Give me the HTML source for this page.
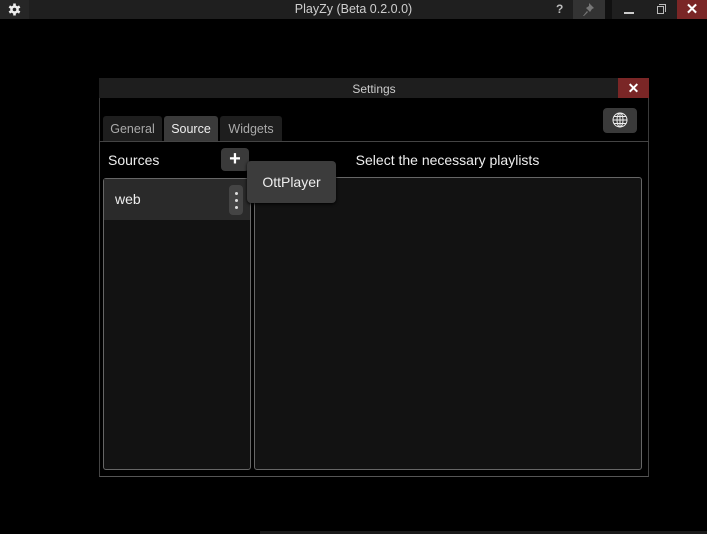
<!DOCTYPE html>
<html><head><meta charset="utf-8"><style>
*{margin:0;padding:0;box-sizing:border-box}
body{width:707px;height:534px;background:#000;position:relative;overflow:hidden;font-family:"Liberation Sans",sans-serif;color:#e8e8e8}
.a{position:absolute}
</style></head><body>
<div class="a" style="left:0;top:0;width:707px;height:19px;background:#1f1f1f"></div>
<div class="a" style="left:0;top:0;width:29px;height:19px;background:#262626"></div>
<svg class="a" style="left:8px;top:3px" width="13" height="13" viewBox="0 0 13 13"><g fill="#eee"><circle cx="6.5" cy="6.5" r="4.3"/><rect x="5.2" y="0.5" width="2.6" height="12"/><rect x="5.2" y="0.5" width="2.6" height="12" transform="rotate(60 6.5 6.5)"/><rect x="5.2" y="0.5" width="2.6" height="12" transform="rotate(120 6.5 6.5)"/></g><circle cx="6.5" cy="6.5" r="1.8" fill="#262626"/></svg>
<div class="a" style="left:0;top:2px;width:707px;text-align:center;font-size:12.5px;color:#cfcfcf">PlayZy (Beta 0.2.0.0)</div>
<div class="a" style="left:556px;top:2px;font-size:12px;font-weight:bold;color:#bbb">?</div>
<div class="a" style="left:573px;top:0;width:32px;height:19px;background:#333"></div>
<svg class="a" style="left:582px;top:2px" width="14" height="15" viewBox="0 0 14 15"><g fill="#777"><path d="M7 1 L12 6 L10 7 L8 10 L4 6 L7 4 Z"/><path d="M5 9 L1 14 L2 14 L6 10 Z"/></g></svg>
<div class="a" style="left:605px;top:0;width:7px;height:19px;background:#111"></div>
<div class="a" style="left:624px;top:12px;width:10px;height:2px;background:#ccc"></div>
<div class="a" style="left:657px;top:6px;width:7px;height:8px;border:1px solid #bbb"></div>
<div class="a" style="left:659px;top:4px;width:7px;height:8px;border-top:1px solid #bbb;border-right:1px solid #bbb"></div>
<div class="a" style="left:677px;top:0;width:30px;height:19px;background:#7a2626;text-align:center;font-size:15px;line-height:19px;color:#fff;font-weight:bold">✕</div>

<div class="a" style="left:99px;top:78px;width:550px;height:399px;border:1px solid #3a3a3a;background:#000"></div>
<div class="a" style="left:99px;top:78px;width:550px;height:20px;background:#1e1e1e"></div>
<div class="a" style="left:99px;top:82px;width:550px;text-align:center;font-size:12px;color:#ccc">Settings</div>
<div class="a" style="left:618px;top:78px;width:31px;height:20px;background:#7a2626;text-align:center;font-size:14px;line-height:20px;color:#fff;font-weight:bold">✕</div>

<div class="a" style="left:103px;top:116px;width:59px;height:25px;background:#1e1e1e;border-radius:3px 3px 0 0;font-size:12.5px;color:#aaa;text-align:center;line-height:26px">General</div>
<div class="a" style="left:164px;top:116px;width:54px;height:25px;background:#3a3a3a;border-radius:3px 3px 0 0;font-size:12.5px;color:#eee;text-align:center;line-height:26px">Source</div>
<div class="a" style="left:220px;top:116px;width:62px;height:25px;background:#1e1e1e;border-radius:3px 3px 0 0;font-size:12.5px;color:#aaa;text-align:center;line-height:26px">Widgets</div>
<div class="a" style="left:603px;top:108px;width:34px;height:25px;background:#3a3a3a;border-radius:4px"></div>
<svg class="a" style="left:611px;top:111px" width="18" height="18" viewBox="0 0 18 18" fill="none" stroke="#eee" stroke-width="1"><circle cx="9" cy="9" r="7"/><ellipse cx="9" cy="9" rx="3" ry="7"/><line x1="2" y1="9" x2="16" y2="9"/><line x1="3" y1="5.5" x2="15" y2="5.5"/><line x1="3" y1="12.5" x2="15" y2="12.5"/><line x1="9" y1="2" x2="9" y2="16"/></svg>

<div class="a" style="left:99px;top:141px;width:550px;height:336px;border:1px solid #444;border-bottom-color:#555"></div>
<div class="a" style="left:108px;top:152px;font-size:14px;color:#eee">Sources</div>
<div class="a" style="left:221px;top:148px;width:28px;height:23px;background:#3a3a3a;border-radius:4px;text-align:center;font-size:20px;line-height:22px;color:#fff;font-weight:bold">+</div>
<div class="a" style="left:254px;top:152px;width:387px;text-align:center;font-size:14px;color:#eee">Select the necessary playlists</div>

<div class="a" style="left:103px;top:178px;width:148px;height:292px;border:1px solid #666;border-radius:3px;background:#121212"></div>
<div class="a" style="left:104px;top:179px;width:146px;height:41px;background:#2a2a2a"></div>
<div class="a" style="left:115px;top:191px;font-size:14px;color:#eee">web</div>
<div class="a" style="left:229px;top:185px;width:14px;height:30px;background:#444;border-radius:4px"></div>
<div class="a" style="left:235px;top:192px;width:3px;height:3px;border-radius:50%;background:#ddd"></div>
<div class="a" style="left:235px;top:199px;width:3px;height:3px;border-radius:50%;background:#ddd"></div>
<div class="a" style="left:235px;top:206px;width:3px;height:3px;border-radius:50%;background:#ddd"></div>

<div class="a" style="left:254px;top:177px;width:388px;height:293px;border:1px solid #666;border-radius:3px;background:#121212"></div>

<div class="a" style="left:247px;top:161px;width:89px;height:42px;background:#3c3c3c;border-radius:4px;box-shadow:0 1px 3px #000;font-size:14px;color:#eee;text-align:center;line-height:42px">OttPlayer</div>

<div class="a" style="left:260px;top:531px;width:447px;height:3px;background:#1a1a1a"></div>
</body></html>
